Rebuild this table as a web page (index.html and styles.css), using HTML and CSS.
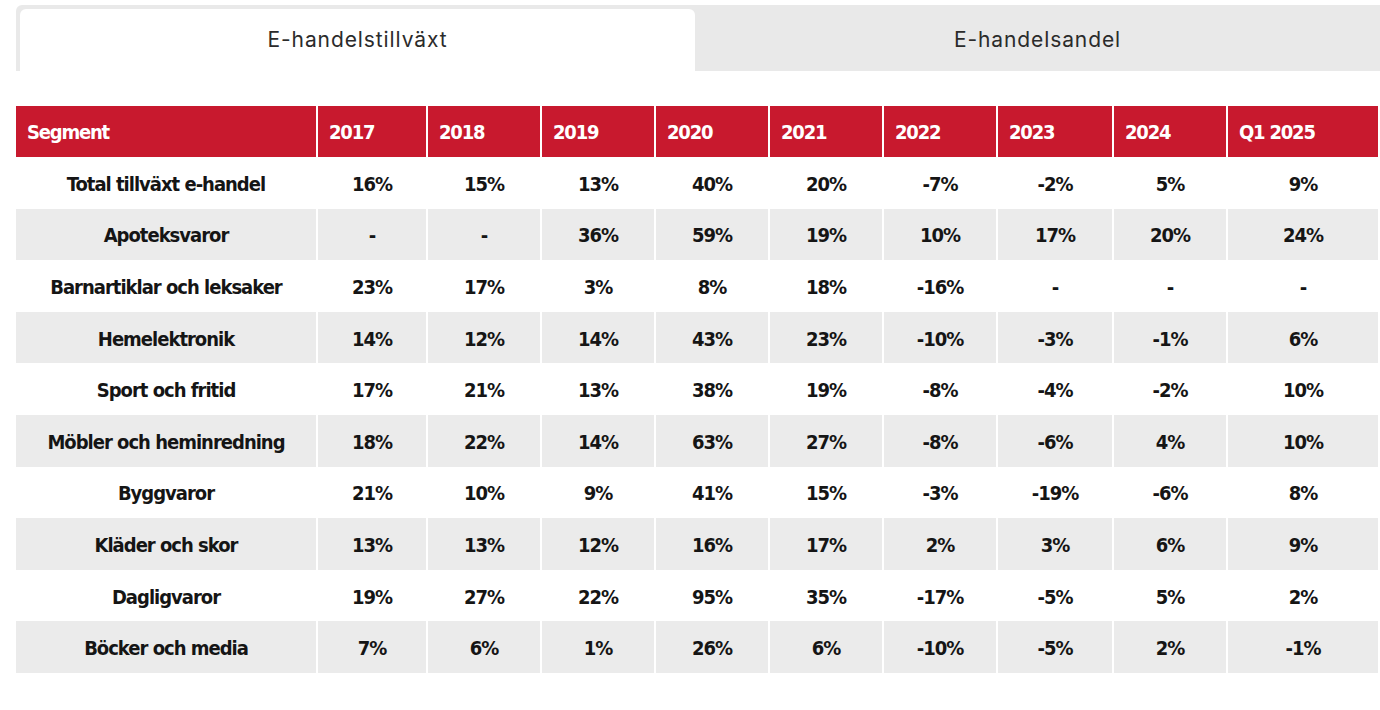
FILE: index.html
```html
<!DOCTYPE html>
<html lang="sv">
<head>
<meta charset="utf-8">
<title>E-handelstillväxt</title>
<link rel="stylesheet" href="styles.css">
</head>
<body>
<div class="page">
  <div class="tabs">
    <div class="tab tab-active">E-handelstillväxt</div>
    <div class="tab">E-handelsandel</div>
  </div>
  <table class="data">
    <colgroup>
      <col class="c-seg"><col class="c-17"><col class="c-y"><col class="c-y"><col class="c-y"><col class="c-y"><col class="c-y"><col class="c-23"><col class="c-y"><col class="c-q">
    </colgroup>
    <thead>
      <tr><th>Segment</th><th>2017</th><th>2018</th><th>2019</th><th>2020</th><th>2021</th><th>2022</th><th>2023</th><th>2024</th><th>Q1 2025</th></tr>
    </thead>
    <tbody>
      <tr><td>Total tillväxt e-handel</td><td>16%</td><td>15%</td><td>13%</td><td>40%</td><td>20%</td><td>-7%</td><td>-2%</td><td>5%</td><td>9%</td></tr>
      <tr><td>Apoteksvaror</td><td>-</td><td>-</td><td>36%</td><td>59%</td><td>19%</td><td>10%</td><td>17%</td><td>20%</td><td>24%</td></tr>
      <tr><td>Barnartiklar och leksaker</td><td>23%</td><td>17%</td><td>3%</td><td>8%</td><td>18%</td><td>-16%</td><td>-</td><td>-</td><td>-</td></tr>
      <tr><td>Hemelektronik</td><td>14%</td><td>12%</td><td>14%</td><td>43%</td><td>23%</td><td>-10%</td><td>-3%</td><td>-1%</td><td>6%</td></tr>
      <tr><td>Sport och fritid</td><td>17%</td><td>21%</td><td>13%</td><td>38%</td><td>19%</td><td>-8%</td><td>-4%</td><td>-2%</td><td>10%</td></tr>
      <tr><td>Möbler och heminredning</td><td>18%</td><td>22%</td><td>14%</td><td>63%</td><td>27%</td><td>-8%</td><td>-6%</td><td>4%</td><td>10%</td></tr>
      <tr><td>Byggvaror</td><td>21%</td><td>10%</td><td>9%</td><td>41%</td><td>15%</td><td>-3%</td><td>-19%</td><td>-6%</td><td>8%</td></tr>
      <tr><td>Kläder och skor</td><td>13%</td><td>13%</td><td>12%</td><td>16%</td><td>17%</td><td>2%</td><td>3%</td><td>6%</td><td>9%</td></tr>
      <tr><td>Dagligvaror</td><td>19%</td><td>27%</td><td>22%</td><td>95%</td><td>35%</td><td>-17%</td><td>-5%</td><td>5%</td><td>2%</td></tr>
      <tr><td>Böcker och media</td><td>7%</td><td>6%</td><td>1%</td><td>26%</td><td>6%</td><td>-10%</td><td>-5%</td><td>2%</td><td>-1%</td></tr>
    </tbody>
  </table>
</div>
</body>
</html>
```
FILE: styles.css
```css
html, body {
  margin: 0;
  padding: 0;
  background: #ffffff;
}

.page {
  padding: 5px 0 0 16px;
}

.tabs {
  display: flex;
  height: 66px;
  background: #e9e9e9;
  border-radius: 6px 0 0 0;
}

.tab {
  display: flex;
  align-items: center;
  justify-content: center;
  flex: 1 1 0;
  font-family: "Inter", "Open Sans", sans-serif;
  font-size: 21px;
  letter-spacing: 0.9px;
  color: #2b2b2b;
  padding-top: 2px;
  box-sizing: border-box;
}

.tab-active {
  flex: 0 0 675px;
  margin: 4px 0 0 4px;
  background: #ffffff;
  border-radius: 6px 6px 0 0;
  padding: 0 0 2px 0;
}

.data {
  margin-top: 35px;
  margin-left: -2px;
  border-collapse: separate;
  border-spacing: 2px 0;
  table-layout: fixed;
  width: 1366px;
  font-family: "DejaVu Sans", sans-serif;
  font-stretch: condensed;
  font-weight: bold;
  font-size: 20px;
  letter-spacing: -1px;
}

.c-seg { width: 300px; }
.c-17 { width: 108px; }
.c-y { width: 112px; }
.c-23 { width: 114px; }
.c-q { width: 150px; }

.data th {
  background: #c8192e;
  color: #ffffff;
  text-align: left;
  height: 51px;
  padding: 0 0 0 11px;
  font-weight: bold;
  letter-spacing: -1.2px;
}

.data td {
  height: 49.6px;
  padding: 2px 0 0 0;
  text-align: center;
  color: #151515;
}

.data tbody tr:nth-child(even) td {
  background: #ebebeb;
}
```
